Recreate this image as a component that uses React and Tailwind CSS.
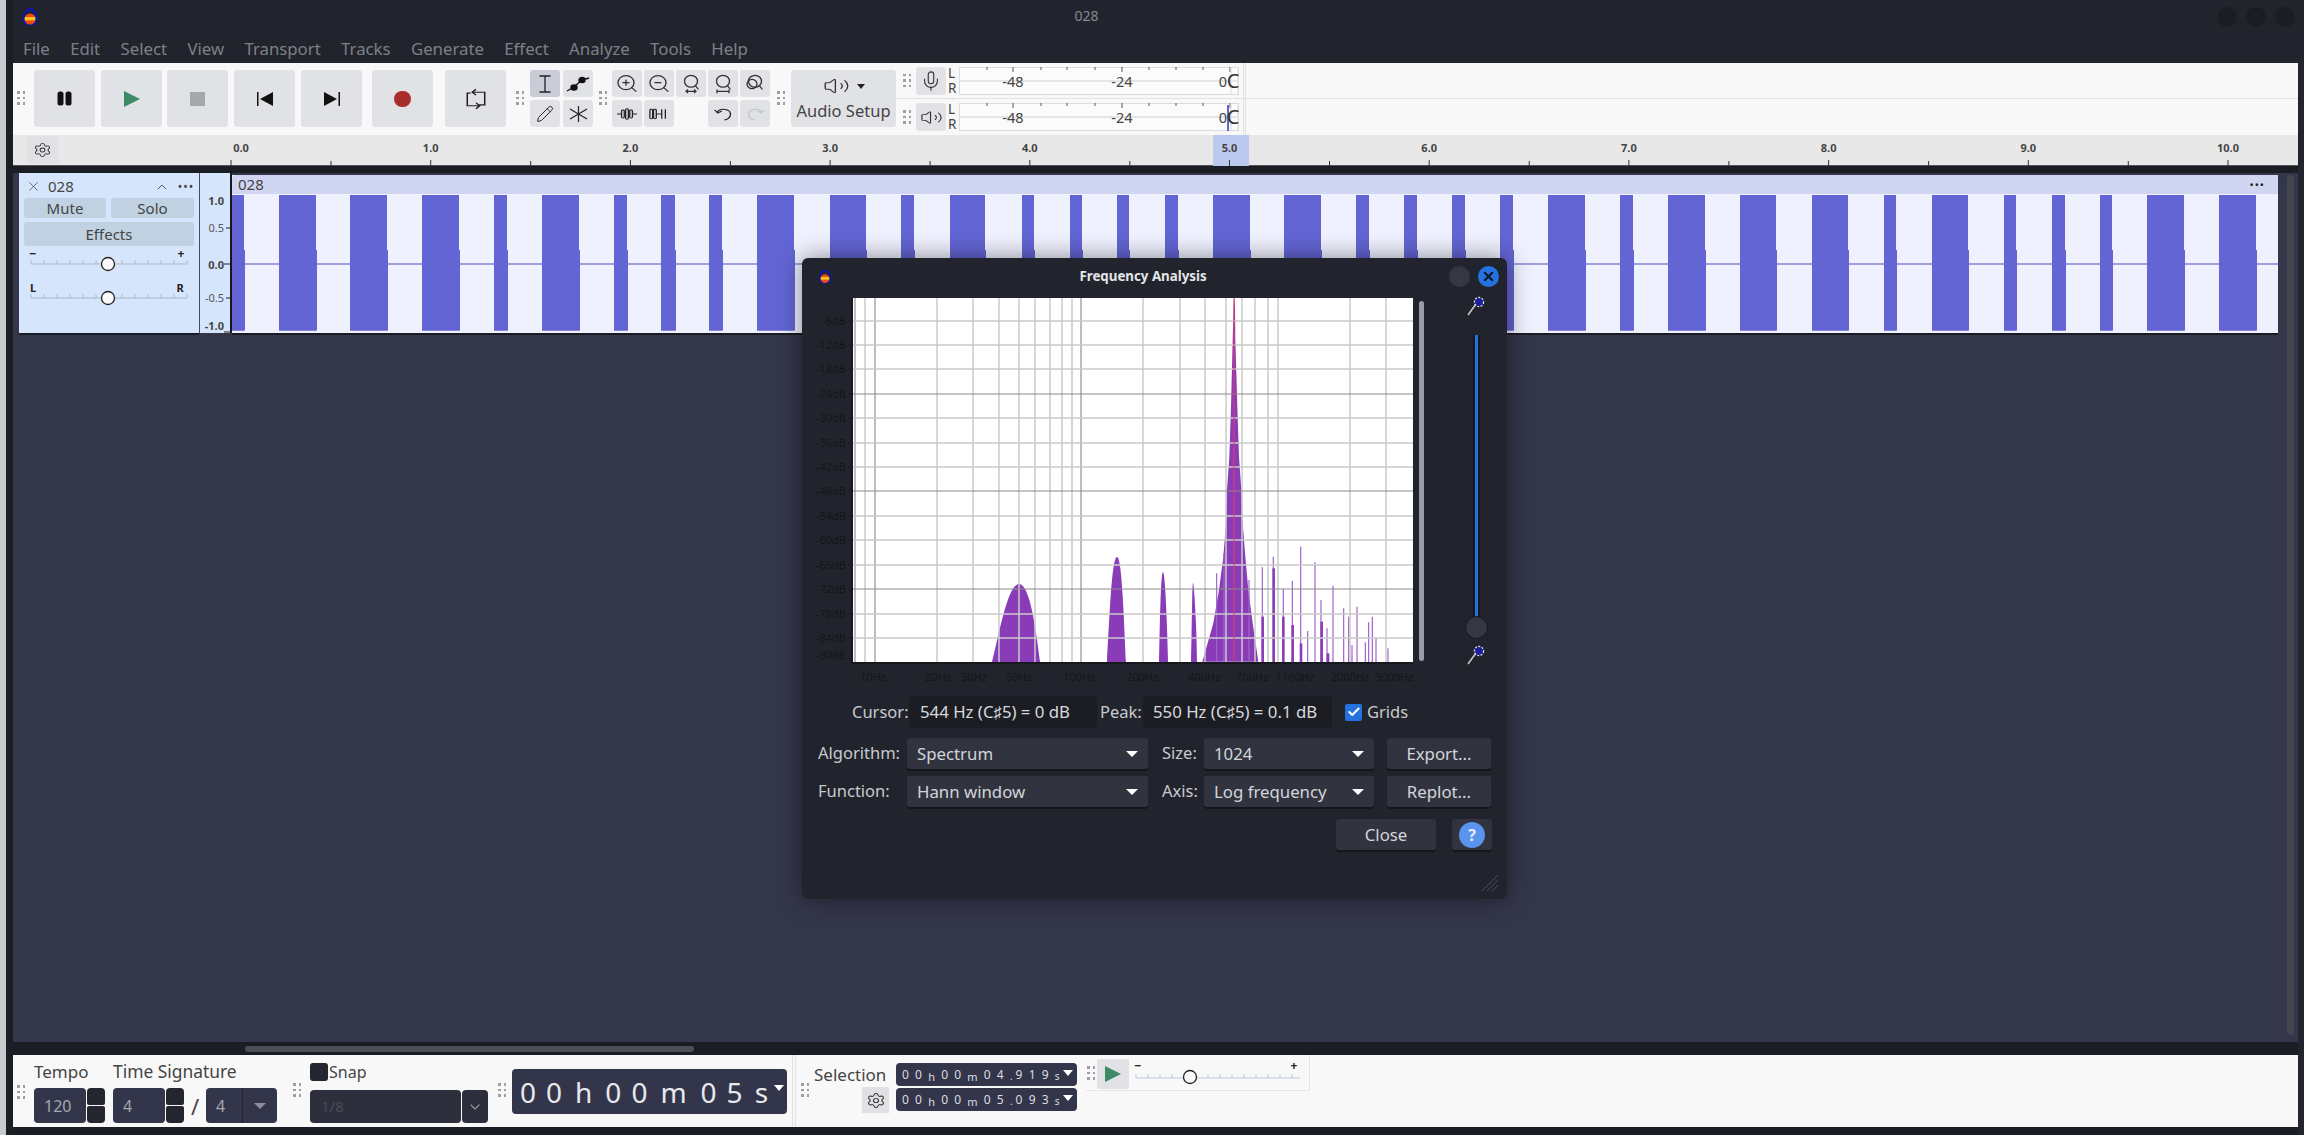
import React from 'react'
import { ZoomIn, ZoomOut, Settings, Mic, Volume2, X, ChevronDown, Check, Pencil } from 'lucide-react'

const menus = ['File', 'Edit', 'Select', 'View', 'Transport', 'Tracks', 'Generate', 'Effect', 'Analyze', 'Tools', 'Help']

const blocks = [
  [232, 244], [279, 316], [350, 387], [422, 459], [494, 507], [542, 579], [614, 627], [661, 675], [709, 722],
  [757, 794], [830, 866], [901, 914], [950, 985], [1022, 1034], [1070, 1082], [1117, 1129], [1165, 1178],
  [1213, 1250], [1284, 1321], [1356, 1369], [1404, 1417], [1452, 1465], [1500, 1513], [1548, 1585], [1620, 1633],
  [1668, 1705], [1740, 1776], [1812, 1848], [1884, 1896], [1932, 1968], [2004, 2016], [2052, 2065], [2100, 2112],
  [2147, 2184], [2219, 2256],
]

const hGrid = [321, 345, 369, 394, 418, 443, 467, 491, 516, 540, 565, 589, 614, 638]
const hDark = [394, 491, 589]
const vGrid = [855, 865, 875, 937, 973, 999, 1019, 1035, 1050, 1062, 1072, 1081, 1143, 1180, 1205, 1226, 1242, 1255, 1268, 1278, 1350, 1386]
const vDark = [855, 875, 1081]
const dbLabels = ['-6dB', '-12dB', '-18dB', '-24dB', '-30dB', '-36dB', '-42dB', '-48dB', '-54dB', '-60dB', '-66dB', '-72dB', '-78dB', '-84dB']
const hzLabels = [[873, '10Hz'], [938, '20Hz'], [974, '30Hz'], [1019, '50Hz'], [1079, '100Hz'], [1142, '200Hz'], [1204, '400Hz'], [1252, '700Hz'], [1295, '1100Hz'], [1350, '2000Hz'], [1394, '3000Hz']]

// spectrum, measured off the 3x crop of the plot
const zx = x => 1100 + x / 3
const zy = y => 290 + y / 3
const mainPeak = [[307, 475, 1115], [340, 458, 1000], [357, 445, 900], [370, 436, 800], [378, 428, 700], [381, 424, 600], [388, 417, 500], [393, 412, 350], [398, 406, 150], [401, 405, 50], [402, 403, 24]]
const mainPoints = [
  ...mainPeak.map(p => `${zx(p[0])},${zy(p[2])}`),
  ...mainPeak.slice().reverse().map(p => `${zx(p[1])},${zy(p[2])}`),
].join(' ')
const thin = [[350, 850], [372, 790], [447, 870], [487, 832], [520, 800], [550, 898], [577, 873], [602, 770], [623, 1023], [645, 817], [663, 930], [681, 1015], [699, 887], [731, 955], [746, 980], [756, 1065], [771, 950], [796, 1057], [806, 997], [817, 980], [828, 1045], [864, 1075]]
const thick = [[488, 980], [521, 835], [550, 980], [578, 1005], [603, 1060], [665, 995], [684, 1090]]

const Grip = ({ className = '' }) => (
  <div className={`grid grid-cols-2 gap-x-[3px] gap-y-[3px] w-[8px] shrink-0 ${className}`}>
    {[0, 1, 2, 3, 4, 5].map(i => <span key={i} className="w-[2.5px] h-[2.5px] bg-[#a0a0a4]" />)}
  </div>
)

const Logo = ({ size = 20 }) => (
  <svg width={size} height={size} viewBox="0 0 20 20">
    <path d="M3.5 12 C3.5 -1 16.5 -1 16.5 12 C16.5 19 3.5 19 3.5 12 Z" fill="none" stroke="#0a14c8" strokeWidth="2" />
    <ellipse cx="10" cy="12" rx="5.5" ry="5.5" fill="#f04a10" />
    <rect x="4.8" y="10" width="10.4" height="3.4" fill="#f5c518" />
  </svg>
)

const TransportBtn = ({ ml, children }) => (
  <div className={`w-[61px] h-[57px] rounded-[3px] bg-[#e1e2e5] flex items-center justify-center ${ml}`}>{children}</div>
)

const ToolBtn = ({ active, children }) => (
  <div className={`w-[30px] h-[27px] rounded-[3px] flex items-center justify-center ${active ? 'bg-[#c8ccd6]' : 'bg-[#e1e2e5]'}`}>{children}</div>
)

const FitIcon = ({ variant }) => (
  <svg width="24" height="22" viewBox="0 0 24 24" fill="none" stroke="#333" strokeWidth="1.3" preserveAspectRatio="none">
    <circle cx="12" cy="9" r="6.5" />
    <path d="M16.5 14 L19.5 18" />
    {variant === 'a' && <path d="M7 20 H17 M9 18 L7 20 L9 22 M15 18 L17 20 L15 22" />}
    {variant === 'b' && <path d="M6 20 H18 M6 18 V22 M18 18 V22" />}
    {variant === 'c' && <circle cx="9" cy="12" r="5" />}
  </svg>
)

const Meter = ({ playhead }) => (
  <svg width="280" height="28" viewBox="0 0 280 28" className="block">
    <rect x="0.5" y="0.5" width="279" height="27" fill="#fbfbfb" stroke="#dcdcdc" />
    <path d="M1 14 H279" stroke="#dedede" strokeWidth="1.5" />
    {[28, 54, 82, 108, 136, 163, 190, 217, 244, 271].map(x => (
      <path key={x} d={`M${x} 0 V${x === 54 || x === 163 || x === 271 ? 5 : 3}`} stroke="#555" strokeWidth="1" />
    ))}
    <rect x="272" y="0.5" width="7" height="27" fill="none" stroke="#dcdcdc" />
    {playhead && <rect x="268" y="2" width="2" height="26" fill="#5d66cf" />}
    <text x="54" y="20" textAnchor="middle" fontSize="14.5" fill="#444">-48</text>
    <text x="163" y="20" textAnchor="middle" fontSize="14.5" fill="#444">-24</text>
    <text x="264" y="20" textAnchor="middle" fontSize="14.5" fill="#444">0</text>
    <text x="274" y="21" textAnchor="middle" fontSize="20" fill="#333">C</text>
  </svg>
)

const LR = () => (
  <div className="flex flex-col ml-[2px] w-[11px] text-[13.5px] leading-[15px] text-[#444]">
    <span className="block h-[15px]">L</span>
    <span className="block h-[15px]">R</span>
  </div>
)

const Caret = ({ className = 'border-t-white' }) => (
  <span className={`inline-block w-0 h-0 border-l-[6px] border-r-[6px] border-t-[6px] border-l-transparent border-r-transparent ${className}`} />
)

const Select = ({ w, label }) => (
  <div className={`h-[31px] rounded-[3px] bg-[#31343f] shadow-[0_2px_0_#14161a] flex items-center justify-between pl-[10px] pr-[10px] text-[16.8px] text-[#d3d5da] ${w}`}>
    <span>{label}</span>
    <Caret />
  </div>
)

const DlgBtn = ({ w, children, className = '' }) => (
  <div className={`h-[31px] rounded-[3px] bg-[#31343f] shadow-[0_2px_0_#14161a] flex items-center justify-center text-[16.8px] text-[#d3d5da] ${w} ${className}`}>{children}</div>
)

const Wand = () => (
  <svg width="22" height="22" viewBox="0 0 22 22">
    <path d="M3 20 L11 9" stroke="#c4c6cc" strokeWidth="1.6" />
    <circle cx="14" cy="7" r="4.6" fill="#1c1f9c" stroke="#e4e4e8" strokeWidth="1.2" strokeDasharray="2 1.4" />
  </svg>
)

const Spinner = () => (
  <div className="w-[18px] h-[35px] flex flex-col gap-[1px]">
    <span className="h-[17px] rounded-t-[4px] rounded-b-[2px] bg-[#23252f]" />
    <span className="h-[17px] rounded-b-[4px] rounded-t-[2px] bg-[#23252f]" />
  </div>
)

const BigTime = () => (
  <div className="flex items-center w-[275px] h-[45px] mt-[14px] ml-[6px] pl-[8px] rounded-[4px] bg-[#33364a] text-[28px] leading-none tracking-[10px] text-[#e8e8ee] relative">
    <span>00</span><span className="ml-[3px] mr-[3px]">h</span><span>00</span><span className="ml-[3px] mr-[4px]">m</span><span>05</span><span className="ml-[2px]">s</span>
    <span className="absolute right-[3px] top-[16px] border-l-[5px] border-r-[5px] border-t-[6px] border-l-transparent border-r-transparent border-t-white" />
  </div>
)

const SmallTime = ({ sec, ms }) => (
  <div className="flex items-center w-[181px] h-[23px] pl-[6px] rounded-[4px] bg-[#33364a] text-[12px] leading-none tracking-[6.2px] text-[#dcdde4] relative">
    <span>00</span><span className="text-[11px] mt-[3px]">h</span><span>00</span><span className="text-[11px] mt-[3px]">m</span><span>{sec}</span><span className="text-[10px] mt-[3px] tracking-[3px]">.</span><span>{ms}</span><span className="text-[10px] mt-[3px]">s</span>
    <span className="absolute right-[4px] top-[7px] border-l-[5px] border-r-[5px] border-t-[6px] border-l-transparent border-r-transparent border-t-white" />
  </div>
)

export default function App() {
  return (
    <div className="w-[2304px] h-[1135px] relative flex overflow-hidden bg-[#22252e] font-['Noto_Sans',sans-serif]">
      <div className="w-[6px] shrink-0 bg-[#c9cacd]" />
      <div className="w-[7px] shrink-0 bg-[#1c1e25]" />

      <div className="flex-1 flex flex-col min-w-0">
        {/* title + menu */}
        <div className="h-[40px] pr-[6px] flex items-center relative bg-[#21242c]">
          <div className="ml-[7px] mt-[-6px]"><Logo /></div>
          <div className="flex-1 text-center text-[14px] text-[#868990] mt-[-10px] mr-[84px]">028</div>
          <div className="flex gap-[9px] mr-[3px] mt-[-6px]">
            {[0, 1, 2].map(i => <span key={i} className="w-[20px] h-[20px] rounded-full bg-[#1a1d23]" />)}
          </div>
        </div>
        <div className="h-[23px] pl-[10px] pb-[5px] flex items-center gap-[20.3px] text-[16.8px] leading-none text-[#7d8086] bg-[#21242c]">
          {menus.map(m => <span key={m}>{m}</span>)}
        </div>

        {/* top toolbar */}
        <div className="h-[72px] mr-[6px] bg-[#f8f8f8] flex">
          <div className="flex items-start pt-[7px]">
            <Grip className="ml-[4px] mt-[21px]" />
            <TransportBtn ml="ml-[9px]">
              <svg width="15" height="15" viewBox="0 0 15 15"><rect x="0.5" y="0.5" width="6" height="14" rx="2.5" fill="#111" /><rect x="8.5" y="0.5" width="6" height="14" rx="2.5" fill="#111" /></svg>
            </TransportBtn>
            <TransportBtn ml="ml-[6px]">
              <svg width="18" height="16" viewBox="0 0 18 16"><path d="M1 0 L17 8 L1 16 Z" fill="#3f8a66" /></svg>
            </TransportBtn>
            <TransportBtn ml="ml-[5px]"><span className="w-[15px] h-[14px] bg-[#a6a7ac]" /></TransportBtn>
            <TransportBtn ml="ml-[6px]">
              <svg width="16" height="14" viewBox="0 0 16 14"><rect x="0" y="0" width="1.5" height="14" fill="#111" /><path d="M16 0 V14 L3 7 Z" fill="#111" /></svg>
            </TransportBtn>
            <TransportBtn ml="ml-[6px]">
              <svg width="16" height="14" viewBox="0 0 16 14"><path d="M0 0 V14 L13 7 Z" fill="#111" /><rect x="14.5" y="0" width="1.5" height="14" fill="#111" /></svg>
            </TransportBtn>
            <TransportBtn ml="ml-[10px]"><span className="w-[17px] h-[16px] rounded-full bg-[#a82e2e]" /></TransportBtn>
            <TransportBtn ml="ml-[12px]">
              <svg width="24" height="22" viewBox="0 0 22 26" fill="none" stroke="#222" strokeWidth="1.4" preserveAspectRatio="none">
                <path d="M8 5 H19 V20 H14 M11 1.5 L7.5 5 L11 8.5" />
                <path d="M14 21 H3 V6 H6 M11 17.5 L14.5 21 L11 24.5" />
              </svg>
            </TransportBtn>
            <Grip className="ml-[10px] mt-[21px]" />
            <div className="ml-[6px] grid grid-cols-2 gap-x-[3px] gap-y-[3px]">
              <ToolBtn active>
                <svg width="14" height="18" viewBox="0 0 14 18" fill="none" stroke="#222" strokeWidth="1.3"><path d="M1.5 1 H12.5 M1.5 17 H12.5 M7 1 V17" /></svg>
              </ToolBtn>
              <ToolBtn>
                <svg width="24" height="16" viewBox="0 0 24 16" fill="none" stroke="#111" strokeWidth="1.4"><path d="M1 15 L8 11 L16 4 L23 2" /><ellipse cx="8" cy="11.5" rx="3" ry="2.6" fill="#111" /><ellipse cx="16" cy="4" rx="3" ry="2.6" fill="#111" /></svg>
              </ToolBtn>
              <ToolBtn><Pencil size={18} strokeWidth={1.3} color="#222" /></ToolBtn>
              <ToolBtn>
                <svg width="19" height="16" viewBox="0 0 19 16" fill="none" stroke="#222" strokeWidth="1.2"><path d="M9.5 0 V16 M1 3 L18 13 M18 3 L1 13" /></svg>
              </ToolBtn>
            </div>
            <Grip className="ml-[6px] mt-[21px]" />
            <div className="ml-[5px] grid grid-cols-5 gap-x-[2px] gap-y-[3px]">
              <ToolBtn><ZoomIn width={24} height={21} strokeWidth={1.3} color="#333" preserveAspectRatio="none" /></ToolBtn>
              <ToolBtn><ZoomOut width={24} height={21} strokeWidth={1.3} color="#333" preserveAspectRatio="none" /></ToolBtn>
              <ToolBtn><FitIcon variant="a" /></ToolBtn>
              <ToolBtn><FitIcon variant="b" /></ToolBtn>
              <ToolBtn><FitIcon variant="c" /></ToolBtn>
              <ToolBtn>
                <svg width="20" height="12" viewBox="0 0 22 18" fill="none" stroke="#222" strokeWidth="1.4" preserveAspectRatio="none"><path d="M0 9 H5 M17 9 H22" /><rect x="5" y="3" width="3" height="12" rx="1.5" /><rect x="9.5" y="1" width="3" height="16" rx="1.5" /><rect x="14" y="3" width="3" height="12" rx="1.5" /></svg>
              </ToolBtn>
              <ToolBtn>
                <svg width="20" height="12" viewBox="0 0 22 18" fill="none" stroke="#222" strokeWidth="1.4" preserveAspectRatio="none"><path d="M8 9 H14" /><rect x="1" y="2" width="3" height="14" rx="1.5" /><rect x="5" y="2" width="3" height="14" rx="1.5" /><path d="M14 2 V16 M18 2 V16" /></svg>
              </ToolBtn>
              <div />
              <ToolBtn>
                <svg width="21" height="17" viewBox="0 0 24 24" fill="none" stroke="#222" strokeWidth="1.5" preserveAspectRatio="none"><path d="M5 10 C8 4 20 5 20 13 C20 18 16 21 13 21 M2 7 L5.5 11.5 L10 8.5" /></svg>
              </ToolBtn>
              <ToolBtn>
                <svg width="21" height="17" viewBox="0 0 24 24" fill="none" stroke="#c2c4c8" strokeWidth="1.5" preserveAspectRatio="none"><path d="M19 10 C16 4 4 5 4 13 C4 18 8 21 11 21 M22 7 L18.5 11.5 L14 8.5" /></svg>
              </ToolBtn>
            </div>
            <Grip className="ml-[7px] mt-[21px]" />
            <div className="ml-[6px] w-[105px] h-[57px] rounded-[3px] bg-[#e1e2e5] flex flex-col items-center pt-[4px]">
              <div className="flex items-center gap-[7px] h-[24px]">
                <Volume2 width={27} height={20} strokeWidth={1.2} color="#333" preserveAspectRatio="none" />
                <span className="inline-block w-0 h-0 border-l-[4px] border-r-[4px] border-t-[5px] border-l-transparent border-r-transparent border-t-[#222]" />
              </div>
              <span className="text-[16.5px] leading-[22px] mt-[2px] text-[#444]">Audio Setup</span>
            </div>
          </div>

          <div className="flex-1 flex flex-col">
            <div className="h-[36px] flex items-center border-b border-[#e2e2e2]">
              <Grip className="ml-[7px]" />
              <div className="ml-[5px] w-[30px] h-[28px] rounded-[3px] bg-[#e1e2e5] flex items-center justify-center"><Mic size={22} strokeWidth={1.2} color="#333" /></div>
              <LR />
              <Meter />
              <div className="ml-[4px] h-full w-[3px] border-x border-[#e2e2e2]" />
            </div>
            <div className="h-[36px] flex items-center">
              <Grip className="ml-[7px]" />
              <div className="ml-[5px] w-[30px] h-[28px] rounded-[3px] bg-[#e1e2e5] flex items-center justify-center"><Volume2 width={23} height={17} strokeWidth={1.2} color="#333" preserveAspectRatio="none" /></div>
              <LR />
              <Meter playhead />
              <div className="ml-[4px] h-full w-[3px] border-x border-[#e2e2e2]" />
            </div>
          </div>
        </div>

        {/* time ruler */}
        <div className="h-[31px] mr-[6px] bg-[#e8e8e9] flex border-b border-[#555]">
          <div className="ml-[14px] w-[31px] h-[27px] mt-[1px] bg-[#e0e1e4] rounded-[2px] flex items-center justify-center shrink-0">
            <Settings width={19} height={16} strokeWidth={1.3} color="#333" preserveAspectRatio="none" />
          </div>
          <svg width="2239" height="31" viewBox="59 135 2239 31" className="block ml-[1px]">
            <rect x="1213" y="135" width="36" height="31" fill="#bcc9ef" />
            {[0, 1, 2, 3, 4, 5, 6, 7, 8, 9, 10].map(i => (
              <g key={i}>
                <path d={`M${231 + i * 199.7} 160 V166`} stroke="#333" strokeWidth="1" />
                <text x={i === 0 ? 241 : 231 + i * 199.7} y="152" textAnchor="middle" fontSize="11" fontWeight="700" fill="#444">{i.toFixed(1)}</text>
                {i < 10 && <path d={`M${331 + i * 199.7} 161 V166`} stroke="#333" strokeWidth="1" />}
              </g>
            ))}
          </svg>
        </div>

        {/* tracks */}
        <div className="h-[7px] bg-[#1b1d24] mr-[6px]" />
        <div className="flex-1 flex bg-[#34374a] pl-[6px] mr-[6px] relative min-h-0">
          <div className="w-[180px] h-[160px] bg-[#d5e5fb] flex flex-col shrink-0 shadow-[0_2px_0_#1b1d24]">
            <div className="h-[25px] pt-[2px] flex items-center text-[#444]">
              <X size={15} strokeWidth={1.2} className="ml-[7px]" />
              <span className="ml-[7px] text-[15px] leading-none">028</span>
              <ChevronDown size={16} strokeWidth={1.3} className="ml-[80px] rotate-180" />
              <span className="ml-[8px] text-[12px] leading-none tracking-[1px]">•••</span>
            </div>
            <div className="flex gap-[5px] mx-[5px]">
              <div className="w-[82px] h-[20px] rounded-[3px] bg-[#c0d2e2] flex items-center justify-center text-[15px] text-[#444]">Mute</div>
              <div className="w-[83px] h-[20px] rounded-[3px] bg-[#c0d2e2] flex items-center justify-center text-[15px] text-[#444]">Solo</div>
            </div>
            <div className="mx-[5px] mt-[4px] h-[24px] rounded-[3px] bg-[#c0d2e2] flex items-center justify-center text-[15px] text-[#444]">Effects</div>
            <svg width="180" height="87" viewBox="19 246 180 87" className="block">
              <text x="33" y="258" fontSize="12" fontWeight="700" fill="#222" textAnchor="middle">−</text>
              <text x="181" y="258" fontSize="12" fontWeight="700" fill="#222" textAnchor="middle">+</text>
              <text x="33" y="292" fontSize="11" fontWeight="700" fill="#222" textAnchor="middle">L</text>
              <text x="180" y="292" fontSize="11" fontWeight="700" fill="#222" textAnchor="middle">R</text>
              {[264, 298].map(y => (
                <g key={y}>
                  <path d={`M31 ${y} H187`} stroke="#b9c6d6" strokeWidth="1.5" />
                  {[31, 44, 57, 70, 83, 96, 122, 135, 148, 161, 174, 187].map(x => <path key={x} d={`M${x} ${y - 4} V${y}`} stroke="#b0bccb" strokeWidth="1" />)}
                  <circle cx="108" cy={y} r="6.5" fill="#fafafa" stroke="#222" strokeWidth="1.3" />
                </g>
              ))}
            </svg>
          </div>
          <svg width="33" height="160" viewBox="199 173 33 160" className="block bg-[#d5e5fb] shrink-0">
            <path d="M199.5 173 V333" stroke="#4a4d58" strokeWidth="1" />
            <path d="M231 173 V333" stroke="#15171d" strokeWidth="2" />
            <path d="M226 228 H231 M224 264 H231 M226 298 H231 M224 332 H231" stroke="#222" strokeWidth="1.2" />
            <text x="224" y="205" textAnchor="end" fontSize="11" fontWeight="700" fill="#444">1.0</text>
            <text x="224" y="232" textAnchor="end" fontSize="11" fill="#555">0.5</text>
            <text x="224" y="269" textAnchor="end" fontSize="11" fontWeight="700" fill="#444">0.0</text>
            <text x="224" y="302" textAnchor="end" fontSize="11" fill="#555">-0.5</text>
            <text x="224" y="330" textAnchor="end" fontSize="11" fontWeight="700" fill="#444">-1.0</text>
          </svg>
          <div className="w-[2046px] h-[158px] mt-[2px] flex flex-col bg-[#eff1fe] shrink-0 shadow-[0_2px_0_#1b1d24]">
            <div className="h-[19px] bg-[#d0d6f2] rounded-tl-[4px] flex items-center justify-between pl-[6px] pr-[13px]">
              <span className="text-[15px] leading-none text-[#444]">028</span>
              <span className="text-[11px] leading-none tracking-[1px] text-[#222]">•••</span>
            </div>
            <svg width="2046" height="139" viewBox="232 194 2046 139" className="block">
              <rect x="232" y="263" width="2046" height="2" fill="#a19fdc" />
              {blocks.map(b => (
                <g key={b[0]}>
                  <rect x={b[0]} y="195" width={b[1] - b[0]} height="135.5" fill="#6365d4" />
                  <rect x={b[0]} y="250" width={b[1] - b[0] + 1} height="80.5" fill="#6365d4" />
                </g>
              ))}
            </svg>
          </div>
          <div className="w-[7px] h-[860px] ml-[9px] mt-[2px] rounded-[3px] bg-[#44464f] shrink-0" />
        </div>

        <div className="h-[13px] bg-[#1b1d24] flex items-center mr-[6px]">
          <div className="ml-[232px] w-[449px] h-[6px] rounded-[3px] bg-[#4d4f57]" />
        </div>

        {/* bottom toolbar */}
        <div className="h-[72px] mr-[6px] bg-[#f8f8f8] flex items-start text-[#444]">
          <Grip className="ml-[4px] mt-[30px]" />
          <div className="ml-[9px] w-[71px]">
            <div className="h-[33px] flex items-center text-[17px] leading-none">Tempo</div>
            <div className="flex gap-[1px]">
              <div className="w-[52px] h-[35px] rounded-[4px] bg-[#33364a] pl-[10px] flex items-center text-[16px] text-[#a4a6b0]">120</div>
              <Spinner />
            </div>
          </div>
          <div className="ml-[8px] w-[164px]">
            <div className="h-[33px] flex items-center text-[17.4px] leading-none whitespace-nowrap">Time Signature</div>
            <div className="flex items-center">
              <div className="w-[52px] h-[35px] rounded-[4px] bg-[#33364a] pl-[10px] flex items-center text-[16px] text-[#a4a6b0]">4</div>
              <div className="ml-[1px]"><Spinner /></div>
              <span className="w-[22px] text-center text-[22px] leading-none">/</span>
              <div className="w-[71px] h-[35px] rounded-[4px] bg-[#33364a] flex items-center text-[16px] text-[#a4a6b0]">
                <span className="w-[36px] pl-[10px]">4</span>
                <span className="w-[35px] h-full border-l border-[#23252f] flex items-center justify-center"><Caret className="border-t-[#8b8d98]" /></span>
              </div>
            </div>
          </div>
          <Grip className="ml-[16px] mt-[28px]" />
          <div className="ml-[9px] w-[178px]">
            <div className="h-[35px] flex items-center pb-[2px]">
              <span className="w-[18px] h-[18px] rounded-[3px] bg-[#23252f]" />
              <span className="ml-[1px] text-[16px] leading-none">Snap</span>
            </div>
            <div className="flex gap-[1px]">
              <div className="w-[151px] h-[33px] rounded-[4px] bg-[#2d2f3c] pl-[11px] flex items-center text-[15px] text-[#4a4c58]">1/8</div>
              <div className="w-[26px] h-[33px] rounded-[4px] bg-[#2d2f3c] flex items-center justify-center"><ChevronDown size={16} color="#8b8d98" /></div>
            </div>
          </div>
          <Grip className="ml-[10px] mt-[28px]" />
          <BigTime />
          <div className="ml-[5px] h-full w-[2px] border-x border-[#e2e2e2] box-content" />
          <Grip className="ml-[5px] mt-[28px]" />
          <div className="ml-[5px] w-[75px] flex flex-col items-end">
            <div className="h-[32px] w-full pt-[6px] text-[17px] leading-[28px] whitespace-nowrap">Selection</div>
            <div className="w-[27px] h-[26px] bg-[#e0e1e4] flex items-center justify-center"><Settings width={20} height={17} strokeWidth={1.3} color="#333" preserveAspectRatio="none" /></div>
          </div>
          <div className="ml-[7px] mt-[8px] flex flex-col gap-[2px]">
            <SmallTime sec="04" ms="919" />
            <SmallTime sec="05" ms="093" />
          </div>
          <div className="flex-1 h-[36px] flex items-start border-b border-[#e6e6e6] ml-[9px] mr-[988px] border-r">
            <Grip className="mt-[11px] ml-[1px]" />
            <div className="ml-[2px] mt-[4px] w-[32px] h-[30px] bg-[#e1e2e5] rounded-[2px] flex items-center justify-center">
              <svg width="18" height="16" viewBox="0 0 18 16"><path d="M1 0 L17 8 L1 16 Z" fill="#3f8a66" /></svg>
            </div>
            <svg width="172" height="34" viewBox="1133 1056 172 34" className="block ml-[3px]">
              <text x="1139" y="1071" fontSize="12" fontWeight="700" fill="#222" textAnchor="middle">−</text>
              <text x="1295" y="1071" fontSize="12" fontWeight="700" fill="#222" textAnchor="middle">+</text>
              <path d="M1137 1079 H1301" stroke="#cfd8e4" strokeWidth="1.5" />
              {[1137, 1149, 1161, 1173, 1209, 1221, 1233, 1245, 1257, 1269, 1281, 1293].map(x => <path key={x} d={`M${x} 1075 V1079`} stroke="#c2ccd9" />)}
              <circle cx="1191" cy="1078" r="6.5" fill="#fafafa" stroke="#222" strokeWidth="1.3" />
            </svg>
          </div>
        </div>
        <div className="h-[8px] bg-[#1b1d24] mr-[6px]" />
      </div>

      {/* Frequency Analysis dialog */}
      <div className="absolute left-[802px] top-[258px] w-[705px] h-[641px] rounded-[6px] bg-[#21242c] shadow-[0_0_24px_rgba(0,0,0,0.45)] flex flex-col">
        <div className="h-[40px] pb-[3px] flex items-center shrink-0 relative">
          <div className="ml-[15px]"><Logo size={16} /></div>
          <div className="flex-1 text-center font-bold text-[13.3px] text-[#e4e5e8] pl-[4px]">Frequency Analysis</div>
          <span className="w-[21px] h-[21px] rounded-full bg-[#353842]" />
          <span className="ml-[8px] mr-[8px] w-[21px] h-[21px] rounded-full bg-[#2472e0] flex items-center justify-center"><X size={15} strokeWidth={3} color="#0f1420" /></span>
        </div>

        <div className="flex h-[392px] shrink-0">
          <svg width="600" height="392" viewBox="815 298 600 392" className="block ml-[13px]">
            <rect x="851" y="298" width="562" height="364" fill="#fff" />
            <path d="M992 662 C1000 630 1008 584 1019 584 C1030 584 1036 630 1040 662 Z" fill="#8a3cb8" />
            <path d="M1107 662 C1110 610 1112 557 1117 557 C1122 557 1124 620 1126 662 Z" fill="#8a3cb8" />
            <path d="M1159 662 C1160 610 1161 572 1163 572 C1165 572 1167 620 1168 662 Z" fill="#8a3cb8" />
            <path d="M1191 662 C1192 630 1192 583 1193 583 C1194 583 1197 630 1197 662 Z" fill="#8a3cb8" />
            <polygon points={mainPoints} fill="#8a3cb8" />
            {thin.map(t => <path key={t[0]} d={`M${zx(t[0])} ${zy(t[1])} V662`} stroke="#a064c8" strokeWidth="1.2" />)}
            {thick.map(t => <path key={t[0]} d={`M${zx(t[0])} ${zy(t[1])} V662`} stroke="#8a3cb8" strokeWidth="2.6" />)}
            {vGrid.map(x => <path key={x} d={`M${x} 298 V662`} stroke={vDark.includes(x) ? '#a8a8a8' : '#cacaca'} strokeWidth="1.5" />)}
            {hGrid.map(y => <path key={y} d={`M851 ${y} H1413`} stroke={hDark.includes(y) ? '#8a8a8a' : '#cacaca'} strokeWidth={hDark.includes(y) ? 1 : 1.5} />)}
            <path d="M1234 298 V662" stroke="#d8406a" strokeWidth="1.2" opacity="0.85" />
            <path d="M852 298 V663 H1413" fill="none" stroke="#17191f" strokeWidth="2" />
            {vGrid.map(x => <path key={x} d={`M${x} 663 V666`} stroke="#17191f" />)}
            {hGrid.map(y => <path key={y} d={`M848 ${y} H851`} stroke="#17191f" />)}
            {dbLabels.map((l, i) => <text key={l} x="846" y={hGrid[i] + 4} textAnchor="end" fontSize="11" fill="#14161b">{l}</text>)}
            <text x="846" y="659" textAnchor="end" fontSize="11" fill="#14161b">-90dB</text>
            {hzLabels.map(h => <text key={h[1]} x={h[0]} y="681" textAnchor="middle" fontSize="11" fill="#14161b">{h[1]}</text>)}
          </svg>
          <div className="w-[5px] h-[360px] ml-[4px] mt-[3px] rounded-[3px] bg-[#9a9ca5]" />
          <div className="ml-[32px] w-[40px] flex flex-col items-center -mt-[3px]">
            <Wand />
            <div className="mt-[18px] w-[7px] h-[287px] rounded-t-[3px] bg-[#171920] flex justify-center shrink-0">
              <span className="w-[3px] h-full bg-[#2472e0]" />
            </div>
            <span className="w-[23px] h-[23px] rounded-full bg-[#353842] border border-[#15171c] -mt-[6px] shrink-0" />
            <div className="mt-[5px]"><Wand /></div>
          </div>
        </div>

        <div className="h-[32px] mt-[6px] flex items-center text-[16.5px] text-[#c8cad0] shrink-0">
          <span className="ml-[50px] w-[57px]">Cursor:</span>
          <div className="w-[188px] h-[32px] rounded-[3px] bg-[#1b1d23] pl-[11px] flex items-center text-[16.8px] text-[#d8d9de]">544 Hz (C♯5) = 0 dB</div>
          <span className="ml-[3px] w-[43px]">Peak:</span>
          <div className="w-[189px] h-[32px] rounded-[3px] bg-[#1b1d23] pl-[10px] flex items-center text-[16.8px] text-[#d8d9de] whitespace-nowrap">550 Hz (C♯5) = 0.1 dB</div>
          <span className="ml-[13px] w-[17px] h-[17px] rounded-[2px] bg-[#2472e0] flex items-center justify-center"><Check size={14} strokeWidth={3.5} color="#fff" /></span>
          <span className="ml-[5px]">Grids</span>
        </div>

        <div className="h-[31px] mt-[10px] flex items-center text-[16.5px] text-[#c8cad0] shrink-0">
          <span className="ml-[16px] w-[89px]">Algorithm:</span>
          <Select w="w-[241px]" label="Spectrum" />
          <span className="ml-[14px] w-[42px]">Size:</span>
          <Select w="w-[170px]" label="1024" />
          <DlgBtn w="w-[104px]" className="ml-[13px]">Export...</DlgBtn>
        </div>

        <div className="h-[31px] mt-[7px] flex items-center text-[16.5px] text-[#c8cad0] shrink-0">
          <span className="ml-[16px] w-[89px]">Function:</span>
          <Select w="w-[241px]" label="Hann window" />
          <span className="ml-[14px] w-[42px]">Axis:</span>
          <Select w="w-[170px]" label="Log frequency" />
          <DlgBtn w="w-[104px]" className="ml-[13px]">Replot...</DlgBtn>
        </div>

        <div className="h-[31px] mt-[12px] flex items-center shrink-0">
          <DlgBtn w="w-[100px]" className="ml-[534px]">Close</DlgBtn>
          <DlgBtn w="w-[40px]" className="ml-[16px]">
            <span className="w-[26px] h-[26px] rounded-full bg-[#5b94ee] flex items-center justify-center font-bold text-[16px] leading-none text-[#e8eefc]">?</span>
          </DlgBtn>
        </div>

        <div className="flex-1 flex items-end justify-end pr-[8px] pb-[7px]">
          <svg width="18" height="18" viewBox="0 0 18 18" fill="none" stroke="#4a4d57" strokeWidth="1"><path d="M1 17 L17 1 M6 17 L17 6 M11 17 L17 11" /></svg>
        </div>
      </div>
    </div>
  )
}
